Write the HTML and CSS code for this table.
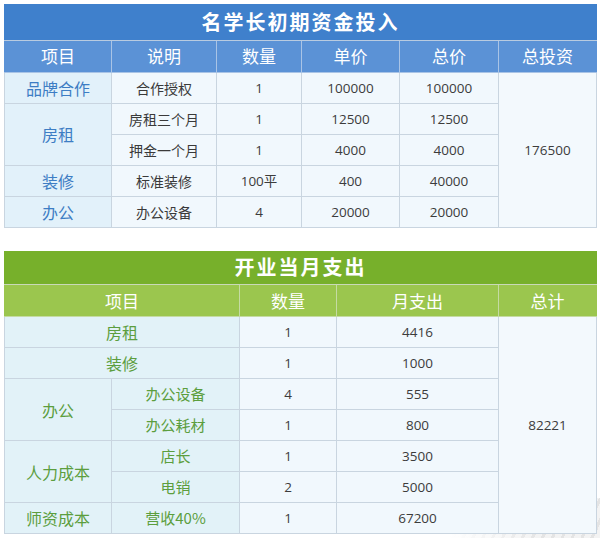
FILE: index.html
```html
<!DOCTYPE html>
<html lang="zh">
<head>
<meta charset="utf-8">
<title>名学长初期资金投入</title>
<link rel="stylesheet" href="styles.css">
</head>
<body>
<div class="page">
  <table class="tbl blue">
    <colgroup>
      <col style="width:107px"><col style="width:105px"><col style="width:85px"><col style="width:98px"><col style="width:99px"><col style="width:98px">
    </colgroup>
    <tr class="title"><td colspan="6">名学长初期资金投入</td></tr>
    <tr class="head"><td>项目</td><td>说明</td><td>数量</td><td>单价</td><td>总价</td><td>总投资</td></tr>
    <tr><td class="cat">品牌合作</td><td>合作授权</td><td class="num">1</td><td class="num">100000</td><td class="num">100000</td><td class="num total" rowspan="5">176500</td></tr>
    <tr><td class="cat" rowspan="2">房租</td><td>房租三个月</td><td class="num">1</td><td class="num">12500</td><td class="num">12500</td></tr>
    <tr><td>押金一个月</td><td class="num">1</td><td class="num">4000</td><td class="num">4000</td></tr>
    <tr><td class="cat">装修</td><td>标准装修</td><td class="num">100平</td><td class="num">400</td><td class="num">40000</td></tr>
    <tr><td class="cat">办公</td><td>办公设备</td><td class="num">4</td><td class="num">20000</td><td class="num">20000</td></tr>
  </table>

  <table class="tbl green">
    <colgroup>
      <col style="width:107px"><col style="width:128px"><col style="width:97px"><col style="width:162px"><col style="width:98px">
    </colgroup>
    <tr class="title"><td colspan="5">开业当月支出</td></tr>
    <tr class="head"><td colspan="2">项目</td><td>数量</td><td>月支出</td><td>总计</td></tr>
    <tr><td class="cat" colspan="2">房租</td><td class="num">1</td><td class="num">4416</td><td class="num total" rowspan="7">82221</td></tr>
    <tr><td class="cat" colspan="2">装修</td><td class="num">1</td><td class="num">1000</td></tr>
    <tr><td class="cat" rowspan="2">办公</td><td class="cat sub">办公设备</td><td class="num">4</td><td class="num">555</td></tr>
    <tr><td class="cat sub">办公耗材</td><td class="num">1</td><td class="num">800</td></tr>
    <tr><td class="cat" rowspan="2">人力成本</td><td class="cat sub">店长</td><td class="num">1</td><td class="num">3500</td></tr>
    <tr><td class="cat sub">电销</td><td class="num">2</td><td class="num">5000</td></tr>
    <tr><td class="cat">师资成本</td><td class="cat sub">营收40%</td><td class="num">1</td><td class="num">67200</td></tr>
  </table>
</div>
</body>
</html>
```

FILE: styles.css
```css
* { box-sizing: border-box; }
html, body { margin: 0; padding: 0; }
body {
  width: 600px;
  height: 538px;
  overflow: hidden;
  background-color: #ffffff;
  background-image:
    linear-gradient(90deg, #ffffff 0%, rgba(255,255,255,0) 60%),
    repeating-linear-gradient(115deg, #e4e4e4 0 3px, #f3f3f3 3px 9px);
  background-size: 150px 40px, 150px 40px;
  background-position: right bottom, right bottom;
  background-repeat: no-repeat;
  font-family: "Noto Sans", "Noto Sans CJK SC", sans-serif;
  color: #333;
}
.page {
  padding: 4px 4px 0 4px;
  display: flex;
  flex-direction: column;
  gap: 23px;
}
.tbl {
  width: 592px;
  table-layout: fixed;
  border-collapse: collapse;
  font-size: 14px;
}
.tbl td {
  border: 1px solid #c9d5e0;
  text-align: center;
  vertical-align: middle;
  height: 31px;
  padding: 0;
  line-height: 20px;
  background: #f1f8fd;
  color: #3a3a3a;
  font-family: "Noto Sans CJK SC", sans-serif;
}
.tbl td.num { font-family: "Open Sans", "Noto Sans CJK SC", sans-serif; font-size: 13.5px; color: #3c3c3c; }
.tbl td.total { background: #f3f9fd; }
.tbl .title td {
  font-size: 20px;
  font-weight: bold;
  color: #fff;
  letter-spacing: 2px;
  height: 36px;
  border-color: #b9cbe0;
  border-top: none;
}
.tbl .head td {
  font-size: 17px;
  color: #fff;
  height: 32px;
}
.tbl td.cat { font-size: 16px; }
.tbl td.cat.sub { font-size: 15px; }

.blue .title td { background: #3f80cc; border-left-color: #3f80cc; border-right-color: #3f80cc; }
.blue .head td { background: #5b92d6; border-color: #a9c4e6; }
.blue .head td:first-child { border-left-color: #5b92d6; }
.blue .head td:last-child { border-right-color: #5b92d6; }
.blue td.cat { background: #e2f1fa; color: #3d7dc4; }

.green .title td { background: #77b02b; border-left-color: #77b02b; border-right-color: #77b02b; height: 34px; border-bottom-color: #c9d9b8; }
.green .head td { background: #9bc64e; border-color: #c5dba3; }
.green .head td:first-child { border-left-color: #9bc64e; }
.green .head td:last-child { border-right-color: #9bc64e; }
.green td.cat { background: #e2f2f8; color: #5c9e3e; }
.green tr td { height: 31px; }
.green .head td { height: 32px; }
```
